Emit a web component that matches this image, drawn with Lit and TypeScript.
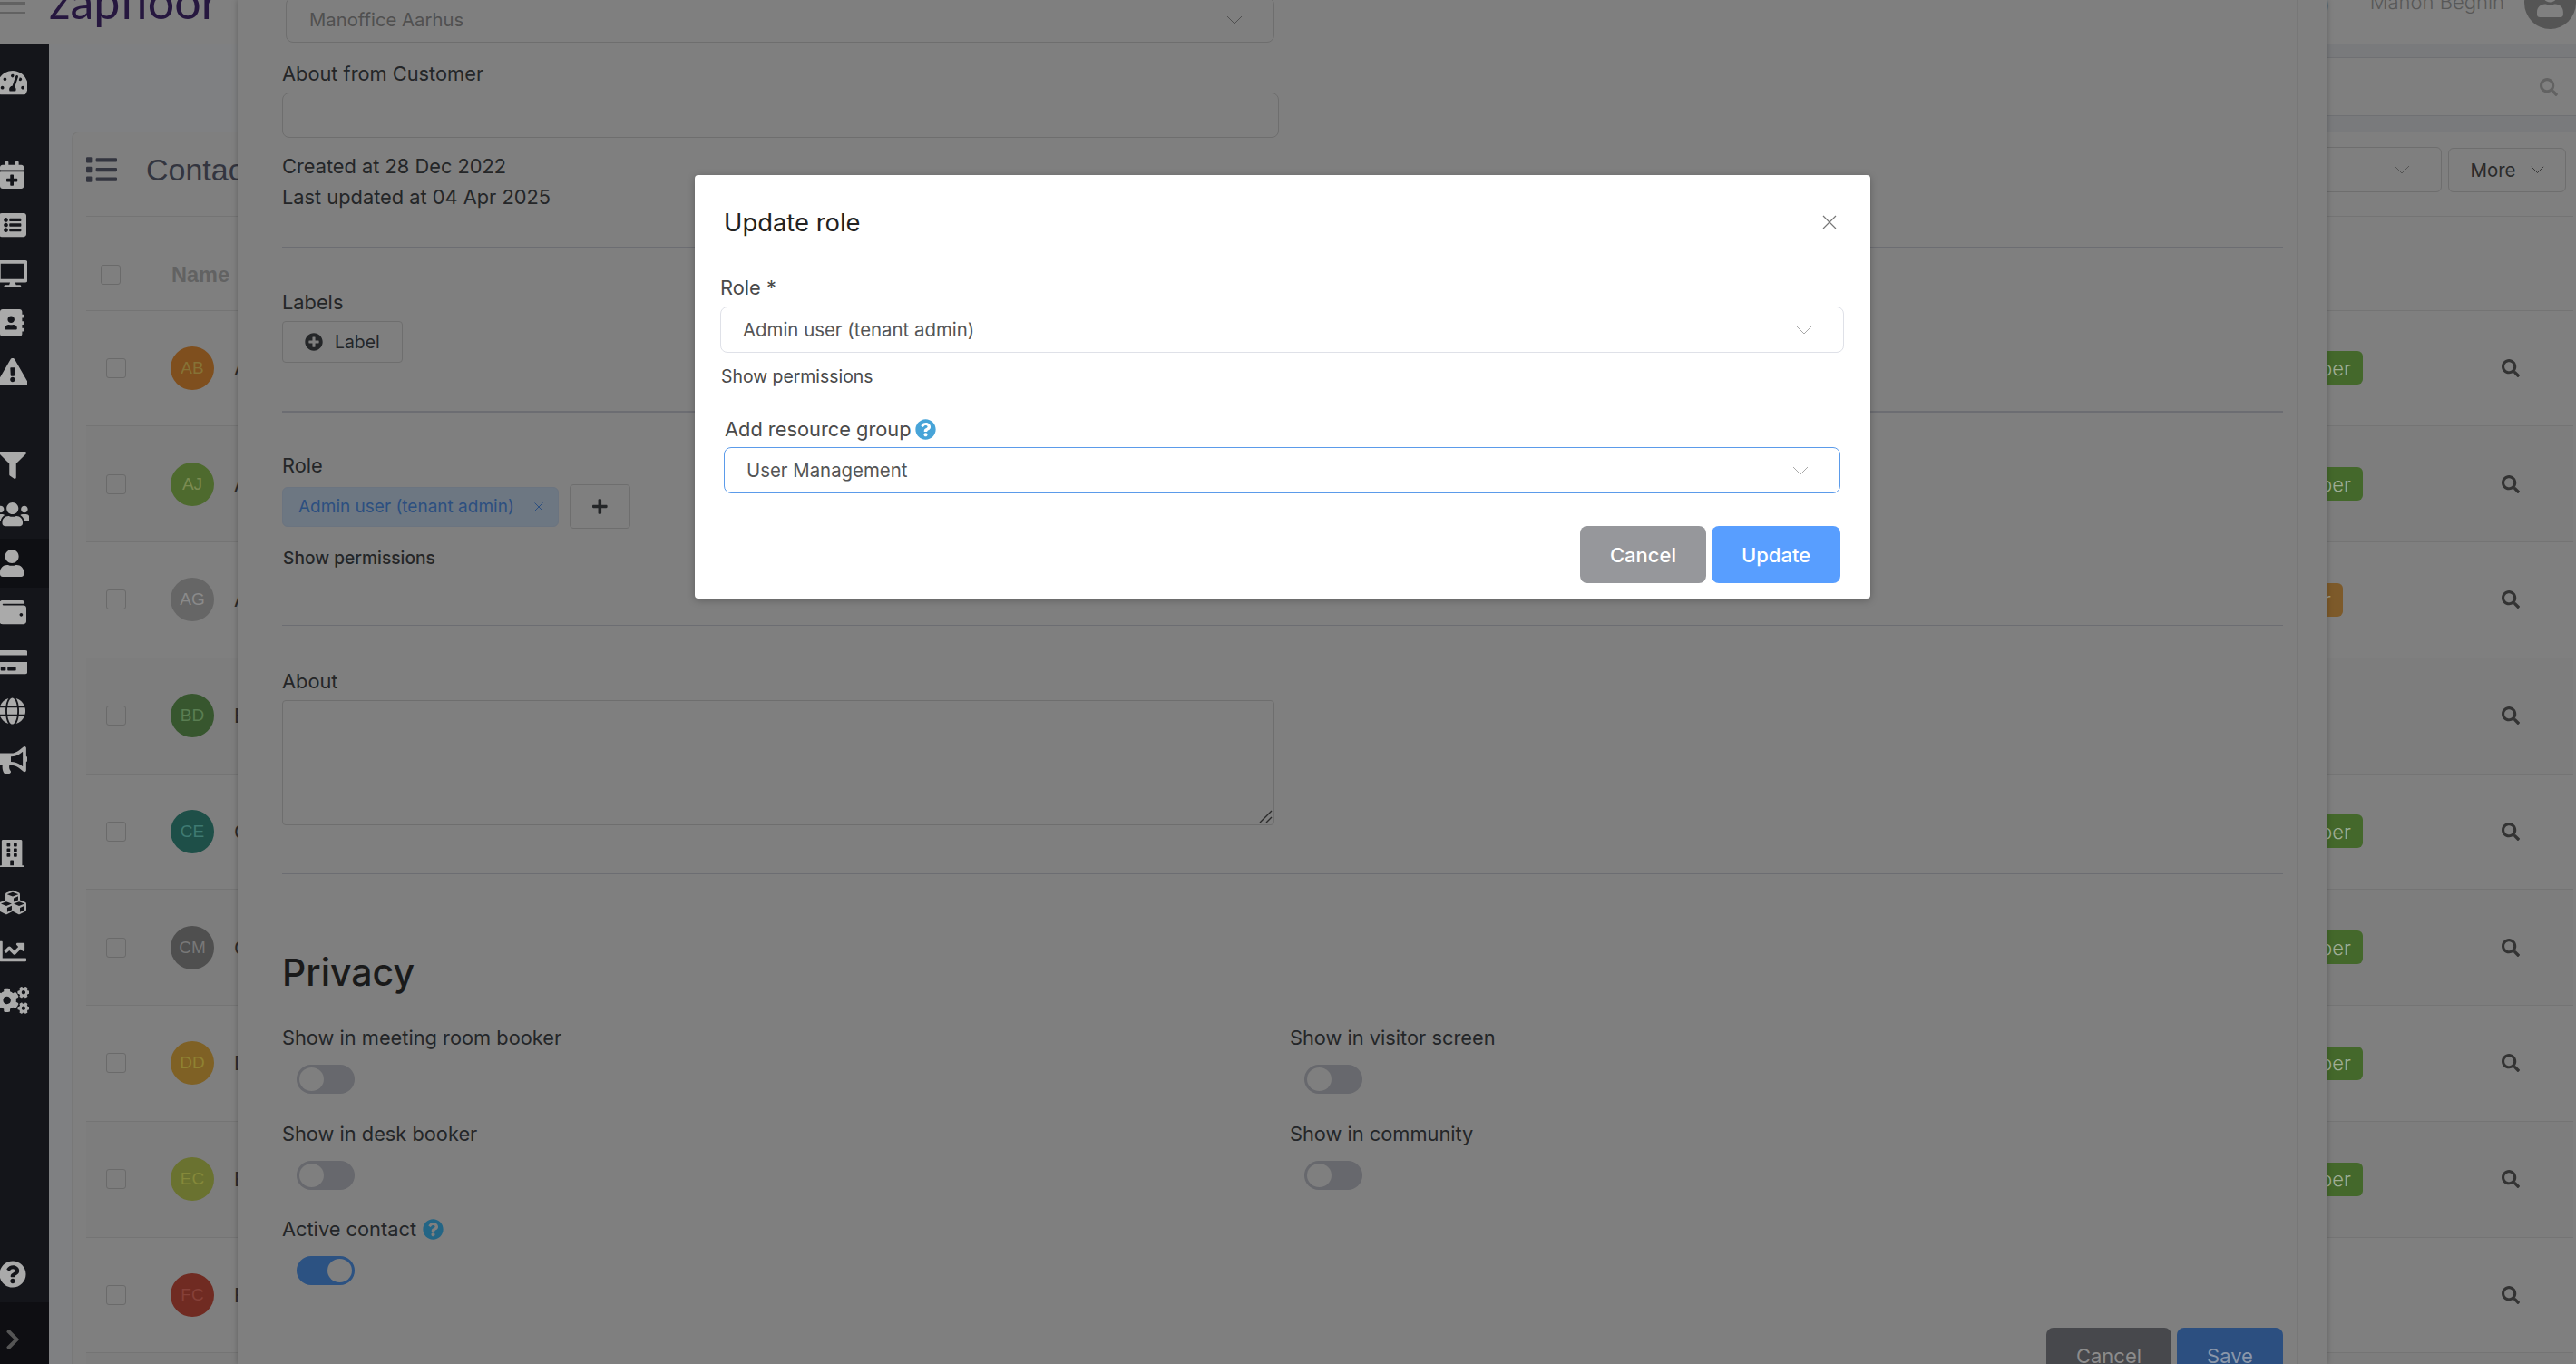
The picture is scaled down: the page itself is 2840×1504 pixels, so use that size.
import { LitElement, html, css, svg } from "lit";
import { customElement } from "lit/decorators.js";

const I: Record<string, [number, number, string]> = {
  search: [512, 512, "M505 442.7L405.3 343c-4.5-4.5-10.6-7-17-7H372c27.6-35.3 44-79.7 44-128C416 93.1 322.9 0 208 0S0 93.1 0 208s93.1 208 208 208c48.3 0 92.7-16.4 128-44v16.3c0 6.4 2.5 12.5 7 17l99.7 99.7c9.4 9.4 24.6 9.4 33.9 0l28.3-28.3c9.4-9.4 9.4-24.6.1-34zM208 336c-70.7 0-128-57.2-128-128 0-70.7 57.2-128 128-128 70.7 0 128 57.2 128 128 0 70.7-57.2 128-128 128z"],
  user: [448, 512, "M224 256c70.7 0 128-57.3 128-128S294.7 0 224 0 96 57.3 96 128s57.3 128 128 128zm89.6 32h-16.7c-22.2 10.2-46.9 16-72.9 16s-50.6-5.8-72.9-16h-16.7C60.2 288 0 348.2 0 422.4V464c0 26.5 21.5 48 48 48h352c26.5 0 48-21.5 48-48v-41.6c0-74.2-60.2-134.4-134.4-134.4z"],
  filter: [512, 512, "M487.976 0H24.028C2.71 0-8.047 25.866 7.058 40.971L192 225.941V432c0 7.831 3.821 15.17 10.237 19.662l80 55.98C298.02 518.69 320 507.493 320 487.98V225.941l184.947-184.97C520.021 25.896 509.338 0 487.976 0z"],
  help: [512, 512, "M504 256c0 136.997-111.043 248-248 248S8 392.997 8 256C8 119.083 119.043 8 256 8s248 111.083 248 248zM262.655 90c-54.497 0-89.255 22.957-116.549 63.758-3.536 5.286-2.353 12.415 2.715 16.258l34.699 26.31c5.205 3.947 12.621 3.008 16.665-2.122 17.864-22.658 30.113-35.797 57.303-35.797 20.429 0 45.698 13.148 45.698 32.958 0 14.976-12.363 22.667-32.534 33.976C247.128 238.528 216 254.941 216 296v4c0 6.627 5.373 12 12 12h56c6.627 0 12-5.373 12-12v-1.333c0-28.462 83.186-29.647 83.186-106.667 0-58.002-60.165-102-116.531-102zM256 338c-25.365 0-46 20.635-46 46 0 25.364 20.635 46 46 46s46-20.636 46-46c0-25.365-20.635-46-46-46z"],
  plusc: [512, 512, "M256 8C119 8 8 119 8 256s111 248 248 248 248-111 248-248S393 8 256 8zm144 276c0 6.6-5.4 12-12 12h-92v92c0 6.6-5.4 12-12 12h-56c-6.6 0-12-5.4-12-12v-92h-92c-6.6 0-12-5.4-12-12v-56c0-6.6 5.4-12 12-12h92v-92c0-6.6 5.4-12 12-12h56c6.6 0 12 5.4 12 12v92h92c6.6 0 12 5.4 12 12v56z"],
  plus: [448, 512, "M416 208H272V64c0-17.67-14.33-32-32-32h-32c-17.67 0-32 14.33-32 32v144H32c-17.67 0-32 14.33-32 32v32c0 17.67 14.33 32 32 32h144v144c0 17.67 14.33 32 32 32h32c17.67 0 32-14.33 32-32V304h144c17.67 0 32-14.33 32-32v-32c0-17.67-14.33-32-32-32z"],
  list: [512, 512, "M80 368H16a16 16 0 0 0-16 16v64a16 16 0 0 0 16 16h64a16 16 0 0 0 16-16v-64a16 16 0 0 0-16-16zm0-320H16A16 16 0 0 0 0 64v64a16 16 0 0 0 16 16h64a16 16 0 0 0 16-16V64a16 16 0 0 0-16-16zm0 160H16a16 16 0 0 0-16 16v64a16 16 0 0 0 16 16h64a16 16 0 0 0 16-16v-64a16 16 0 0 0-16-16zm416 176H176a16 16 0 0 0-16 16v32a16 16 0 0 0 16 16h320a16 16 0 0 0 16-16v-32a16 16 0 0 0-16-16zm0-320H176a16 16 0 0 0-16 16v32a16 16 0 0 0 16 16h320a16 16 0 0 0 16-16V80a16 16 0 0 0-16-16zm0 160H176a16 16 0 0 0-16 16v32a16 16 0 0 0 16 16h320a16 16 0 0 0 16-16v-32a16 16 0 0 0-16-16z"],
  warn: [576, 512, "M569.517 440.013C587.975 472.007 564.806 512 527.94 512H48.054c-36.937 0-59.999-40.055-41.577-71.987L246.423 23.985c18.467-32.009 64.72-31.951 83.154 0l239.94 416.028zM288 354c-25.405 0-46 20.595-46 46s20.595 46 46 46 46-20.595 46-46-20.595-46-46-46zm-43.673-165.346l7.418 136c.347 6.364 5.609 11.346 11.982 11.346h48.546c6.373 0 11.635-4.982 11.982-11.346l7.418-136c.375-6.874-5.098-12.654-11.982-12.654h-63.383c-6.884 0-12.356 5.78-11.981 12.654z"],
  desktop: [576, 512, "M528 0H48C21.5 0 0 21.5 0 48v320c0 26.5 21.5 48 48 48h192l-16 48h-72c-13.3 0-24 10.7-24 24s10.7 24 24 24h272c13.3 0 24-10.7 24-24s-10.7-24-24-24h-72l-16-48h192c26.5 0 48-21.5 48-48V48c0-26.5-21.5-48-48-48zm-16 352H64V64h448v288z"],
  chev: [320, 512, "M285.476 272.971L91.132 467.314c-9.373 9.373-24.569 9.373-33.941 0l-22.667-22.667c-9.357-9.357-9.375-24.522-.04-33.901L188.505 256 34.484 101.255c-9.335-9.379-9.317-24.544.04-33.901l22.667-22.667c9.373-9.373 24.569-9.373 33.941 0L285.475 239.03c9.373 9.372 9.373 24.568.001 33.941z"],
  cal: [448, 512, "M436 160H12c-6.6 0-12-5.4-12-12v-36c0-26.5 21.5-48 48-48h48V12c0-6.6 5.4-12 12-12h40c6.6 0 12 5.4 12 12v52h128V12c0-6.6 5.4-12 12-12h40c6.6 0 12 5.4 12 12v52h48c26.5 0 48 21.5 48 48v36c0 6.6-5.4 12-12 12zM12 192h424c6.6 0 12 5.4 12 12v260c0 26.5-21.5 48-48 48H48c-26.5 0-48-21.5-48-48V204c0-6.6 5.4-12 12-12zm316 140c0-6.6-5.4-12-12-12h-60v-60c0-6.6-5.4-12-12-12h-40c-6.6 0-12 5.4-12 12v60h-60c-6.6 0-12 5.4-12 12v40c0 6.6 5.4 12 12 12h60v60c0 6.6 5.4 12 12 12h40c6.6 0 12-5.4 12-12v-60h60c6.6 0 12-5.4 12-12v-40z"],
  card: [576, 512, "M0 432c0 26.5 21.5 48 48 48h480c26.5 0 48-21.5 48-48V256H0v176zm192-68c0-6.6 5.4-12 12-12h136c6.6 0 12 5.4 12 12v40c0 6.6-5.4 12-12 12H204c-6.6 0-12-5.4-12-12v-40zm-128 0c0-6.6 5.4-12 12-12h72c6.6 0 12 5.4 12 12v40c0 6.6-5.4 12-12 12H76c-6.6 0-12-5.4-12-12v-40zM576 80v48H0V80c0-26.5 21.5-48 48-48h480c26.5 0 48 21.5 48 48z"],
  wallet: [512, 512, "M461.2 128H80c-8.84 0-16-7.16-16-16s7.16-16 16-16h384c8.84 0 16-7.16 16-16 0-26.51-21.49-48-48-48H64C28.65 32 0 60.65 0 96v320c0 35.35 28.65 64 64 64h397.2c28.02 0 50.8-21.53 50.8-48V176c0-26.47-22.78-48-50.8-48zM416 336c-17.67 0-32-14.33-32-32s14.33-32 32-32 32 14.33 32 32-14.33 32-32 32z"],
  building: [448, 512, "M436 480h-20V24c0-13.255-10.745-24-24-24H56C42.745 0 32 10.745 32 24v456H12c-6.627 0-12 5.373-12 12v20h448v-20c0-6.627-5.373-12-12-12zM128 76c0-6.627 5.373-12 12-12h40c6.627 0 12 5.373 12 12v40c0 6.627-5.373 12-12 12h-40c-6.627 0-12-5.373-12-12V76zm0 96c0-6.627 5.373-12 12-12h40c6.627 0 12 5.373 12 12v40c0 6.627-5.373 12-12 12h-40c-6.627 0-12-5.373-12-12v-40zm52 148h-40c-6.627 0-12-5.373-12-12v-40c0-6.627 5.373-12 12-12h40c6.627 0 12 5.373 12 12v40c0 6.627-5.373 12-12 12zm76 160h-64v-84c0-6.627 5.373-12 12-12h40c6.627 0 12 5.373 12 12v84zm64-172c0 6.627-5.373 12-12 12h-40c-6.627 0-12-5.373-12-12v-40c0-6.627 5.373-12 12-12h40c6.627 0 12 5.373 12 12v40zm0-96c0 6.627-5.373 12-12 12h-40c-6.627 0-12-5.373-12-12v-40c0-6.627 5.373-12 12-12h40c6.627 0 12 5.373 12 12v40zm0-96c0 6.627-5.373 12-12 12h-40c-6.627 0-12-5.373-12-12V76c0-6.627 5.373-12 12-12h40c6.627 0 12 5.373 12 12v40z"],
  chart: [512, 512, "M496 384H64V80c0-8.84-7.16-16-16-16H16C7.16 64 0 71.16 0 80v336c0 17.67 14.33 32 32 32h464c8.84 0 16-7.16 16-16v-32c0-8.84-7.16-16-16-16zM464 96H345.94c-21.38 0-32.09 25.85-16.97 40.97l32.4 32.4L288 242.75l-73.37-73.37c-12.5-12.5-32.76-12.5-45.25 0l-68.69 68.69c-6.25 6.25-6.25 16.38 0 22.63l22.62 22.62c6.25 6.25 16.38 6.25 22.63 0L192 237.25l73.37 73.37c12.5 12.5 32.76 12.5 45.25 0l96-96 32.4 32.4c15.12 15.12 40.97 4.41 40.97-16.97V112c.01-8.84-7.15-16-15.99-16z"],
  gauge: [576, 512, "M288 32C128.94 32 0 160.94 0 320c0 52.8 14.25 102.26 39.06 144.8 5.61 9.62 16.3 15.2 27.44 15.2h443c11.14 0 21.83-5.58 27.44-15.2C561.75 422.26 576 372.8 576 320c0-159.06-128.94-288-288-288zm0 64c14.71 0 26.58 10.13 30.32 23.65-1.11 2.26-2.64 4.23-3.45 6.67l-9.22 27.67c-5.13 3.49-10.97 6.01-17.64 6.01-17.67 0-32-14.33-32-32S270.33 96 288 96zM96 384c-17.67 0-32-14.33-32-32s14.33-32 32-32 32 14.33 32 32-14.33 32-32 32zm48-160c-17.67 0-32-14.33-32-32s14.33-32 32-32 32 14.33 32 32-14.33 32-32 32zm246.77-72.41l-61.33 184C343.13 347.33 352 364.54 352 384c0 11.72-3.38 22.55-8.88 32H232.88c-5.5-9.45-8.88-20.28-8.88-32 0-33.94 26.5-61.43 59.9-63.59l61.34-184.01c4.17-12.56 17.73-19.45 30.36-15.17 12.57 4.19 19.35 17.79 15.17 30.36zm14.66 57.2l15.52-46.55c3.47-1.29 7.13-2.23 11.05-2.23 17.67 0 32 14.33 32 32s-14.33 32-32 32c-11.38-.01-20.89-6.28-26.57-15.22zM480 384c-17.67 0-32-14.33-32-32s14.33-32 32-32 32 14.33 32 32-14.33 32-32 32z"],
  users: [640, 512, "M96 224c35.3 0 64-28.7 64-64s-28.7-64-64-64-64 28.7-64 64 28.7 64 64 64zm448 0c35.3 0 64-28.7 64-64s-28.7-64-64-64-64 28.7-64 64 28.7 64 64 64zm32 32h-64c-17.6 0-33.5 7.1-45.1 18.6 40.3 22.1 68.9 62 75.1 109.4h66c17.7 0 32-14.3 32-32v-32c0-35.3-28.7-64-64-64zm-256 0c61.9 0 112-50.1 112-112S381.9 32 320 32 208 82.1 208 144s50.1 112 112 112zm76.8 32h-8.3c-20.8 10-43.9 16-68.5 16s-47.6-6-68.5-16h-8.3C179.6 288 128 339.6 128 403.2V432c0 26.5 21.5 48 48 48h288c26.5 0 48-21.5 48-48v-28.8c0-63.6-51.6-115.2-115.2-115.2zm-223.7-13.4C161.5 263.1 145.6 256 128 256H64c-35.3 0-64 28.7-64 64v32c0 17.7 14.3 32 32 32h65.9c6.3-47.4 34.9-87.3 75.2-109.4z"],
  book: [448, 512, "M436 160c6.6 0 12-5.4 12-12v-40c0-6.6-5.4-12-12-12h-20V48c0-26.5-21.5-48-48-48H48C21.5 0 0 21.5 0 48v416c0 26.5 21.5 48 48 48h320c26.5 0 48-21.5 48-48v-48h20c6.6 0 12-5.4 12-12v-40c0-6.6-5.4-12-12-12h-20v-64h20c6.6 0 12-5.4 12-12v-40c0-6.6-5.4-12-12-12h-20v-64h20zm-228-32c35.3 0 64 28.7 64 64s-28.7 64-64 64-64-28.7-64-64 28.7-64 64-64zm112 236.8c0 10.6-10 19.2-22.4 19.2H118.4C106 384 96 375.4 96 364.8v-19.2c0-31.8 30.1-57.6 67.2-57.6h5c12.3 5.1 25.7 8 39.8 8s27.6-2.9 39.8-8h5c37.1 0 67.2 25.8 67.2 57.6v19.2z"],
  listalt: [512, 512, "M464 480H48c-26.51 0-48-21.49-48-48V80c0-26.51 21.49-48 48-48h416c26.51 0 48 21.49 48 48v352c0 26.51-21.49 48-48 48zM128 120c-22.091 0-40 17.909-40 40s17.909 40 40 40 40-17.909 40-40-17.909-40-40-40zm0 96c-22.091 0-40 17.909-40 40s17.909 40 40 40 40-17.909 40-40-17.909-40-40-40zm0 96c-22.091 0-40 17.909-40 40s17.909 40 40 40 40-17.909 40-40-17.909-40-40-40zm288-136v-32c0-6.627-5.373-12-12-12H204c-6.627 0-12 5.373-12 12v32c0 6.627 5.373 12 12 12h200c6.627 0 12-5.373 12-12zm0 96v-32c0-6.627-5.373-12-12-12H204c-6.627 0-12 5.373-12 12v32c0 6.627 5.373 12 12 12h200c6.627 0 12-5.373 12-12zm0 96v-32c0-6.627-5.373-12-12-12H204c-6.627 0-12 5.373-12 12v32c0 6.627 5.373 12 12 12h200c6.627 0 12-5.373 12-12z"],
  globe: [496, 512, "M336.5 160C322 70.7 287.8 8 248 8s-74 62.7-88.5 152h177zM152 256c0 22.2 1.2 43.5 3.3 64h185.3c2.1-20.5 3.3-41.8 3.3-64s-1.2-43.5-3.3-64H155.3c-2.1 20.5-3.3 41.8-3.3 64zm324.7-96c-28.6-67.9-86.5-120.4-158-141.6 24.4 33.8 41.2 84.7 50 141.6h108zM177.2 18.4C105.8 39.6 47.8 92.1 19.3 160h108c8.7-56.9 25.5-107.8 49.9-141.6zM487.4 192H372.7c2.1 21 3.3 42.5 3.3 64s-1.2 43-3.3 64h114.6c5.5-20.5 8.6-41.8 8.6-64s-3.1-43.5-8.5-64zM120 256c0-21.5 1.2-43 3.3-64H8.6C3.2 212.5 0 233.8 0 256s3.2 43.5 8.6 64h114.6c-2-21-3.2-42.5-3.2-64zm39.5 96c14.5 89.3 48.7 152 88.5 152s74-62.7 88.5-152h-177zm159.3 141.6c71.4-21.2 129.4-73.7 158-141.6h-108c-8.8 56.9-25.6 107.8-50 141.6zM19.3 352c28.6 67.9 86.5 120.4 158 141.6-24.4-33.8-41.2-84.7-50-141.6h-108z"],
  horn: [576, 512, "M576 240c0-23.63-12.95-44.04-32-55.12V32.01C544 23.26 537.02 0 512 0c-7.12 0-14.19 2.38-19.98 7.02l-85.03 68.03C364.28 109.19 310.66 128 256 128H64c-35.35 0-64 28.65-64 64v96c0 35.35 28.65 64 64 64h33.7c-1.39 10.48-2.18 21.14-2.18 32 0 39.77 9.26 77.35 25.56 110.94 5.19 10.69 16.52 17.06 28.4 17.06h74.28c26.05 0 41.69-29.84 25.9-50.56-16.4-21.52-26.15-48.36-26.15-77.44 0-11.11 1.62-21.79 4.41-32H256c54.66 0 108.28 18.81 150.98 52.95l85.03 68.03a32.023 32.023 0 0 0 19.98 7.02c24.92 0 32-22.78 32-32V295.13C563.05 284.04 576 263.63 576 240zm-96 141.42l-33.05-26.44C392.95 311.78 325.12 288 256 288v-96c69.12 0 136.95-23.78 190.95-66.98L480 98.58v282.84z"],
  cubes: [512, 512, "M488.6 250.2L392 214V105.5c0-15-9.3-28.4-23.4-33.7l-100-37.5c-8.1-3.1-17.1-3.1-25.3 0l-100 37.5c-14.1 5.3-23.4 18.7-23.4 33.7V214l-96.6 36.2C9.3 255.5 0 268.9 0 283.9V394c0 13.6 7.7 26.1 19.9 32.2l100 50c10.1 5.1 22.1 5.1 32.2 0l103.9-52 103.9 52c10.1 5.1 22.1 5.1 32.2 0l100-50c12.2-6.1 19.9-18.6 19.9-32.2V283.9c0-15-9.3-28.4-23.4-33.7zM358 214.8l-85 31.9v-68.2l85-37v73.3zM154 104.1l102-38.2 102 38.2v.6l-102 41.4-102-41.4v-.6zm84 291.1l-85 42.5v-79.1l85-38.8v75.4zm0-112l-102 41.4-102-41.4v-.6l102-38.2 102 38.2v.6zm240 112l-85 42.5v-79.1l85-38.8v75.4zm0-112l-102 41.4-102-41.4v-.6l102-38.2 102 38.2v.6z"],
  cogs: [640, 512, "M512.1 191l-8.2 14.3c-3 5.3-9.4 7.5-15.1 5.4-11.8-4.4-22.6-10.7-32.1-18.6-4.6-3.8-5.8-10.5-2.8-15.7l8.2-14.3c-6.9-8-12.3-17.3-15.9-27.4h-16.5c-6 0-11.2-4.3-12.2-10.3-2-12-2.1-24.6 0-37.1 1-6 6.2-10.4 12.2-10.4h16.5c3.6-10.1 9-19.4 15.9-27.4l-8.2-14.3c-3-5.2-1.9-11.9 2.8-15.7 9.5-7.9 20.4-14.2 32.1-18.6 5.7-2.1 12.1.1 15.1 5.4l8.2 14.3c10.5-1.9 21.2-1.9 31.7 0L552 6.3c3-5.3 9.4-7.5 15.1-5.4 11.8 4.4 22.6 10.7 32.1 18.6 4.6 3.8 5.8 10.5 2.8 15.7l-8.2 14.3c6.9 8 12.3 17.3 15.9 27.4h16.5c6 0 11.2 4.3 12.2 10.3 2 12 2.1 24.6 0 37.1-1 6-6.2 10.4-12.2 10.4h-16.5c-3.6 10.1-9 19.4-15.9 27.4l8.2 14.3c3 5.2 1.9 11.9-2.8 15.7-9.5 7.9-20.4 14.2-32.1 18.6-5.7 2.1-12.1-.1-15.1-5.4l-8.2-14.3c-10.4 1.9-21.2 1.9-31.7 0zm-10.5-58.8c38.5 29.6 82.4-14.3 52.8-52.8-38.5-29.7-82.4 14.3-52.8 52.8zM386.3 286.1l33.7 16.8c10.1 5.8 14.5 18.1 10.5 29.1-8.9 24.2-26.4 46.4-42.6 65.8-7.4 8.9-20.2 11.1-30.3 5.3l-29.1-16.8c-16 13.7-34.6 24.6-54.9 31.7v33.6c0 11.6-8.3 21.6-19.7 23.6-24.6 4.2-50.4 4.4-75.9 0-11.5-2-20-11.9-20-23.6V418c-20.3-7.2-38.9-18-54.9-31.7L74 403c-10 5.8-22.9 3.6-30.3-5.3-16.2-19.4-33.3-41.6-42.2-65.7-4-10.9.4-23.2 10.5-29.1l33.3-16.8c-3.9-20.9-3.9-42.4 0-63.4L12 205.8c-10.1-5.8-14.6-18.1-10.5-29 8.9-24.2 26-46.4 42.2-65.8 7.4-8.9 20.2-11.1 30.3-5.3l29.1 16.8c16-13.7 34.6-24.6 54.9-31.7V57.1c0-11.5 8.2-21.5 19.6-23.5 24.6-4.2 50.5-4.4 76-.1 11.5 2 20 11.9 20 23.6v33.6c20.3 7.2 38.9 18 54.9 31.7l29.1-16.8c10-5.8 22.9-3.6 30.3 5.3 16.2 19.4 33.2 41.6 42.1 65.8 4 10.9.1 23.2-10 29.1l-33.7 16.8c3.9 21 3.9 42.5 0 63.5zm-117.6 21.1c59.2-77-28.7-164.9-105.7-105.7-59.2 77 28.7 164.9 105.7 105.7zm243.4 182.7l-8.2 14.3c-3 5.3-9.4 7.5-15.1 5.4-11.8-4.4-22.6-10.7-32.1-18.6-4.6-3.8-5.8-10.5-2.8-15.7l8.2-14.3c-6.9-8-12.3-17.3-15.9-27.4h-16.5c-6 0-11.2-4.3-12.2-10.3-2-12-2.1-24.6 0-37.1 1-6 6.2-10.4 12.2-10.4h16.5c3.6-10.1 9-19.4 15.9-27.4l-8.2-14.3c-3-5.2-1.9-11.9 2.8-15.7 9.5-7.9 20.4-14.2 32.1-18.6 5.7-2.1 12.1.1 15.1 5.4l8.2 14.3c10.5-1.9 21.2-1.9 31.7 0l8.2-14.3c3-5.3 9.4-7.5 15.1-5.4 11.8 4.4 22.6 10.7 32.1 18.6 4.6 3.8 5.8 10.5 2.8 15.7l-8.2 14.3c6.9 8 12.3 17.3 15.9 27.4h16.5c6 0 11.2 4.3 12.2 10.3 2 12 2.1 24.6 0 37.1-1 6-6.2 10.4-12.2 10.4h-16.5c-3.6 10.1-9 19.4-15.9 27.4l8.2 14.3c3 5.2 1.9 11.9-2.8 15.7-9.5 7.9-20.4 14.2-32.1 18.6-5.7 2.1-12.1-.1-15.1-5.4l-8.2-14.3c-10.4 1.9-21.2 1.9-31.7 0zM501.6 431c38.5 29.6 82.4-14.3 52.8-52.8-38.5-29.6-82.4 14.3-52.8 52.8z"],
};

const icon = (n: string, h: number) => {
  const [w, vh, d] = I[n];
  return html`<svg class="ico" viewBox="0 0 ${w} ${vh}" width=${(h * w) / vh} height=${h} fill="currentColor">${svg`<path d=${d}></path>`}</svg>`;
};

const chevron = (w = 18) => html`<svg class="chev" viewBox="0 0 18 10" width=${w} height=${(w * 10) / 18} fill="none" stroke="currentColor" stroke-width="1">${svg`<path d="M1 1l8 8 8-8"></path>`}</svg>`;

const NAV_GROUPS = [["gauge"], ["cal", "listalt", "desktop", "book", "warn"], ["filter", "users", "user", "wallet", "card", "globe", "horn"], ["building", "cubes", "chart", "cogs"]];

const ROWS = [
  { i: "AB", bg: "#7f4f1e", fg: "#867236", l: "A", badge: "g" },
  { i: "AJ", bg: "#4e6a2e", fg: "#7b8b52", l: "A", badge: "g" },
  { i: "AG", bg: "#666666", fg: "#8a8a8a", l: "A", badge: "o" },
  { i: "BD", bg: "#37562e", fg: "#5a7e52", l: "B", badge: "" },
  { i: "CE", bg: "#1e4f48", fg: "#3f7a72", l: "C", badge: "g" },
  { i: "CM", bg: "#4f4f4f", fg: "#787878", l: "C", badge: "g" },
  { i: "DD", bg: "#7f6125", fg: "#8f8232", l: "D", badge: "g" },
  { i: "EC", bg: "#6a7230", fg: "#85893a", l: "E", badge: "g" },
  { i: "FC", bg: "#702b22", fg: "#864038", l: "F", badge: "" },
  { i: "", bg: "", fg: "", l: "", badge: "" },
];

@customElement("app-root")
export class AppRoot extends LitElement {
  static styles = css`
    :host { display: block; font-family: Inter, "Liberation Sans", sans-serif; }
    * { box-sizing: border-box; }
    .ico, .chev { display: block; flex: none; }
    .page { position: relative; width: 2840px; height: 1504px; overflow: hidden; background: #7f8082; color: #242424; }

    .header { height: 48px; display: flex; align-items: flex-start; background: #808080; }
    .burger { width: 54px; flex: none; display: flex; flex-direction: column; gap: 8px; padding-top: 2px; }
    .burger i { display: block; width: 28px; height: 2.5px; background: #626262; }
    .logo { font-family: Lato, sans-serif; font-weight: 400; font-size: 52px; line-height: 64px; margin-top: -31px; color: #26173f; }
    .hright { margin-left: auto; display: flex; align-items: flex-start; font-size: 22px; line-height: 26px; color: #585858; }
    .hright .paren { margin-top: -8px; margin-right: 44px; }
    .hright .name { margin-top: -11px; margin-right: 22px; font-weight: 300; }
    .uav { width: 57px; height: 58px; margin-top: -26px; border-radius: 50%; background: #555; color: #808080; display: flex; justify-content: center; align-items: flex-end; padding-bottom: 13px; }

    .body { display: flex; height: 1456px; }
    .side { position: relative; z-index: 3; width: 54px; flex: none; background: #14151a; color: #aaaaaa; display: flex; flex-direction: column; padding-top: 15.5px; overflow: hidden; }
    .group { margin-bottom: 48.6px; }
    .nav { height: 54.2px; width: 54px; display: flex; align-items: center; flex: none; }
    .nav.on { background: #0e0f13; }
    .nav span { width: 27px; display: flex; justify-content: center; overflow: visible; }
    .side .grow { flex: 1; }
    .nav.q { margin-bottom: 4px; }
    .foot { height: 68px; background: #0e0e12; color: #555; display: flex; align-items: flex-start; padding: 28px 0 0 6px; }

    .main { flex: 1; min-width: 0; overflow: hidden; }
    .band { margin-left: 1900px; height: 16px; background: #797a7c; border-bottom: 1px solid #6f7073; }
    .searchrow { margin-left: 1900px; height: 64px; background: #7f7f7f; border-bottom: 1px solid #6f7073; display: flex; align-items: center; justify-content: space-between; padding-right: 20px; color: #626262; font-size: 22px; font-weight: 300; }
    .searchrow .ph { margin-left: 486px; }
    .band2 { margin-left: 1900px; height: 17px; background: #797a7c; }
    .card { margin-left: 25px; background: #7f7f7f; border: 1px solid #787878; border-right: 0; border-radius: 8px 0 0 0; padding-left: 15px; height: 1360px; }
    .toolbar { height: 93px; border-bottom: 1px solid #747474; margin-right: 3px; display: flex; align-items: center; padding-bottom: 10px; }
    .toolbar .lst { color: #33353f; margin-right: 32px; }
    .toolbar .ttl { font-size: 34px; line-height: 40px; color: #33353f; white-space: nowrap; font-family: "Liberation Sans", sans-serif; }
    .toolbar .sel { margin-left: auto; width: 300px; height: 50px; border: 1px solid #6e6e6e; border-radius: 6px; color: #555; display: flex; align-items: center; justify-content: flex-end; padding-right: 34px; margin-right: 7px; }
    .toolbar .more { width: 130px; height: 49px; margin-right: 8px; border: 1px solid #6e6e6e; border-radius: 6px; display: flex; align-items: center; justify-content: center; gap: 16px; font-size: 20.5px; color: #2a2a2a; }
    .thead { height: 103.5px; margin-right: 3px; border-bottom: 1px solid #747474; display: flex; align-items: center; padding-top: 26px; }
    .thead .cb { margin-left: 16px; width: 22px; height: 22px; }
    .thead b { margin-left: 56px; font-size: 23.5px; font-weight: 700; color: #626262; font-family: "Liberation Sans", sans-serif; }
    .cb { width: 22px; height: 22px; border: 1px solid #6a6a6a; border-radius: 3px; flex: none; }
    .row { height: 127.75px; margin-right: 3px; border-bottom: 1px solid #747474; display: flex; align-items: center; }
    .row.alt { background: #7d7d7d; }
    .row .cb { margin-left: 22px; }
    .avatar { margin-left: 49px; width: 48px; height: 48px; border-radius: 50%; flex: none; display: flex; align-items: center; justify-content: center; font-family: "Liberation Sans", sans-serif; font-size: 19px; }
    .rname { margin-left: 22px; font-size: 22px; color: #2a2a2a; }
    .bcol { margin-left: auto; width: 120px; margin-right: 153px; }
    .badge { height: 37px; border-radius: 6px; display: flex; align-items: center; justify-content: flex-end; padding-right: 13px; font-size: 22px; font-weight: 300; color: #a0ad94; }
    .badge.g { background: #44682b; }
    .badge.o { width: 98px; background: #7d5a2a; color: #a09a88; }
    .mag { color: #333; margin-right: 59px; }

    .panel { position: absolute; z-index: 1; left: 262px; top: 0; width: 2304px; height: 1504px; background: #7f7f7f; overflow: hidden; padding: 0 33px; box-shadow: 0 0 6px rgba(0,0,0,.25); }
    .sheet { height: 1600px; margin-top: -3px; border-left: 1px solid #777; border-right: 1px solid #777; padding: 0 15px; color: #242628; font-size: 21.8px; line-height: 26px; }
    .input { height: 50px; width: 1099px; border: 1px solid #6e6e6e; border-radius: 8px; }
    .sel0 { width: 1090px; margin-left: 4px; display: flex; align-items: center; justify-content: space-between; padding: 0 34px 0 25px; color: #505050; font-size: 20.3px; }
    .about-from { margin-top: 21px; }
    .mt8 { margin-top: 8px; }
    .dates { margin-top: 14px; line-height: 34px; }
    .hr { height: 1px; background: #6c6d72; }
    .hr.thick { height: 2px; }
    .chips { display: flex; margin-top: 8px; align-items: center; gap: 12px; }
    .lbtn { margin-top: 8px; width: 133px; height: 46px; border: 1px solid #6e6e6e; border-radius: 4px; display: flex; align-items: center; gap: 13px; padding-left: 24px; font-size: 19.4px; }
    .chip { width: 305px; height: 44px; background: #6d7782; border: 1px solid #6b7480; border-radius: 6px; color: #2c4f80; font-size: 19px; display: flex; align-items: center; justify-content: space-between; padding: 0 16px 0 17px; }
    .chip svg { display: block; }
    .plus { width: 67px; height: 49px; border: 1px solid #6e6e6e; border-radius: 4px; display: flex; align-items: center; justify-content: center; }
    .perm { font-size: 19.2px; font-weight: 500; }
    .textarea { position: relative; width: 1094px; height: 138px; margin-top: 8px; border: 1px solid #6e6e6e; border-radius: 4px; }
    .grip { position: absolute; right: 1px; bottom: 1px; }
    .privacy { margin-top: 80px; font-size: 41px; line-height: 56px; font-weight: 500; color: #1a1a1a; }
    .grid { display: grid; grid-template-columns: 1111px 1fr; margin-top: 31px; }
    .f1 { height: 105.5px; }
    .lab { display: flex; align-items: center; gap: 7px; height: 26px; }
    .toggle { margin: 17px 0 0 16px; width: 64px; height: 32px; border-radius: 16px; background: #67686d; padding: 3px; display: flex; }
    .toggle i { display: block; width: 27px; height: 26px; border-radius: 50%; background: #7f7f7f; }
    .toggle.on { background: #2c5282; justify-content: flex-end; }
    .acts { display: flex; justify-content: flex-end; gap: 6px; }
    .pbtn { height: 62px; border-radius: 8px; color: #8c8c8c; font-size: 22px; display: flex; align-items: center; justify-content: center; }
    .pbtn.c { width: 138px; background: #47484c; }
    .pbtn.s { width: 117px; background: #2c4f80; color: #8a97aa; }

    .backdrop { position: absolute; z-index: 2; inset: 0; }
    .modal { position: absolute; z-index: 4; left: 766px; top: 193px; width: 1296px; height: 467px; background: #fff; border-radius: 4px; box-shadow: 0 2px 8px rgba(0,0,0,.25); padding-top: 34px; color: #4a4a4a; font-size: 21.8px; line-height: 26px; }
    .mhead { margin-left: 32px; width: 1227px; height: 36px; display: flex; align-items: center; justify-content: space-between; }
    .mtitle { font-size: 27.4px; line-height: 36px; color: #222; }
    .rolel { margin: 41px 0 0 28px; }
    .msel { height: 51px; border-radius: 8px; border: 1px solid #dfe1e8; display: flex; align-items: center; justify-content: space-between; color: #555; font-size: 20.4px; }
    .msel.a { margin: 8px 0 0 28px; width: 1239px; padding: 0 34px 0 24px; }
    .msel.b { margin: 7px 0 0 32px; width: 1231px; padding: 1px 34px 0 24px; border: 1.5px solid #5b9bea; }
    .mperm { margin: 13px 0 0 29px; font-size: 19.4px; color: #4a4a4a; }
    .addl { margin: 32px 0 1px 33px; display: flex; align-items: center; gap: 4px; }
    .help { color: #47a4d8; }
    .mact { margin: 36px 0 0 0; width: 1263px; display: flex; justify-content: flex-end; gap: 6px; }
    .mbtn { height: 63px; border-radius: 8px; color: #fff; font-size: 22px; font-weight: 500; display: flex; align-items: center; justify-content: center; }
    .mbtn.c { width: 139px; background: #96979b; }
    .mbtn.u { width: 142px; background: #589eff; }
    .chevg { color: #a8a8a8; }
  `;

  render() {
    return html`
      <div class="page">
        <div class="header">
          <div class="burger"><i></i><i></i></div>
          <div class="logo">zapfloor</div>
          <div class="hright"><span class="paren">(Admin)</span><span class="name">Manon Beghin</span><div class="uav">${icon("user", 33)}</div></div>
        </div>
        <div class="body">
          <nav class="side">
            ${NAV_GROUPS.map((g) => html`<div class="group">${g.map((n) => html`<div class="nav ${n === "user" ? "on" : ""}"><span>${icon(n, 30)}</span></div>`)}</div>`)}
            <div class="grow"></div>
            <div class="nav q"><span>${icon("help", 30)}</span></div>
            <div class="foot">${icon("chev", 26)}</div>
          </nav>
          <div class="main">
            <div class="band"></div>
            <div class="searchrow"><span class="ph">Search...</span>${icon("search", 20)}</div>
            <div class="band2"></div>
            <div class="card">
              <div class="toolbar">
                <span class="lst">${icon("list", 34)}</span><span class="ttl">Contacts</span>
                <div class="sel">${chevron(18)}</div>
                <div class="more">More ${chevron(15)}</div>
              </div>
              <div class="thead"><div class="cb"></div><b>Name</b></div>
              ${ROWS.map((r, i) => html`<div class="row ${i % 2 ? "alt" : ""}">
                <div class="cb"></div>
                ${r.i ? html`<div class="avatar" style="background:${r.bg};color:${r.fg}">${r.i}</div><div class="rname">${r.l}</div>
                <div class="bcol">${r.badge ? html`<div class="badge ${r.badge}">${r.badge === "g" ? "Member" : "Partner"}</div>` : ""}</div>
                <div class="mag">${icon("search", 20)}</div>` : ""}
              </div>`)}
            </div>
          </div>
        </div>

        <aside class="panel">
          <div class="sheet">
            <div class="input sel0"><span>Manoffice Aarhus</span>${chevron(18)}</div>
            <div class="about-from">About from Customer</div>
            <div class="input mt8"></div>
            <div class="dates">Created at 28 Dec 2022<br />Last updated at 04 Apr 2025</div>
            <div class="hr" style="margin-top:38px"></div>
            <div style="margin-top:47px">Labels</div>
            <div class="lbtn">${icon("plusc", 20)}<span>Label</span></div>
            <div class="hr thick" style="margin-top:53px"></div>
            <div style="margin-top:45px">Role</div>
            <div class="chips">
              <div class="chip"><span>Admin user (tenant admin)</span><svg viewBox="0 0 10 10" width="10" height="10" fill="none" stroke="currentColor" stroke-width="1">${svg`<path d="M.5.5l9 9M9.5.5l-9 9"></path>`}</svg></div>
              <div class="plus">${icon("plus", 19)}</div>
            </div>
            <div class="perm" style="margin-top:19px;margin-left:1px">Show permissions</div>
            <div class="hr" style="margin-top:61px"></div>
            <div style="margin-top:48px">About</div>
            <div class="textarea"><svg class="grip" viewBox="0 0 16 16" width="16" height="16" fill="none" stroke="#2a2a2a" stroke-width="1.4">${svg`<path d="M15 2L2 15M15 9l-6 6"></path>`}</svg></div>
            <div class="hr" style="margin-top:53px"></div>
            <div class="privacy">Privacy</div>
            <div class="grid">
              <div class="f1"><div class="lab">Show in meeting room booker</div><div class="toggle"><i></i></div></div>
              <div class="f1"><div class="lab">Show in visitor screen</div><div class="toggle"><i></i></div></div>
              <div class="f1"><div class="lab">Show in desk booker</div><div class="toggle"><i></i></div></div>
              <div class="f1"><div class="lab">Show in community</div><div class="toggle"><i></i></div></div>
              <div class="f1"><div class="lab">Active contact <span style="color:#236585">${icon("help", 23)}</span></div><div class="toggle on"><i></i></div></div>
            </div>
            <div class="acts" style="margin-top:16px"><div class="pbtn c">Cancel</div><div class="pbtn s">Save</div></div>
          </div>
        </aside>

        <div class="backdrop"></div>

        <section class="modal">
          <div class="mhead"><div class="mtitle">Update role</div><svg viewBox="0 0 16 16" width="16" height="16" fill="none" stroke="#777" stroke-width="1.2">${svg`<path d="M1 1l14 14M15 1L1 15"></path>`}</svg></div>
          <div class="rolel">Role *</div>
          <div class="msel a"><span>Admin user (tenant admin)</span><span class="chevg">${chevron(18)}</span></div>
          <div class="mperm">Show permissions</div>
          <div class="addl"><span>Add resource group</span><span class="help">${icon("help", 23)}</span></div>
          <div class="msel b"><span>User Management</span><span class="chevg">${chevron(18)}</span></div>
          <div class="mact"><div class="mbtn c">Cancel</div><div class="mbtn u">Update</div></div>
        </section>
      </div>
    `;
  }
}
